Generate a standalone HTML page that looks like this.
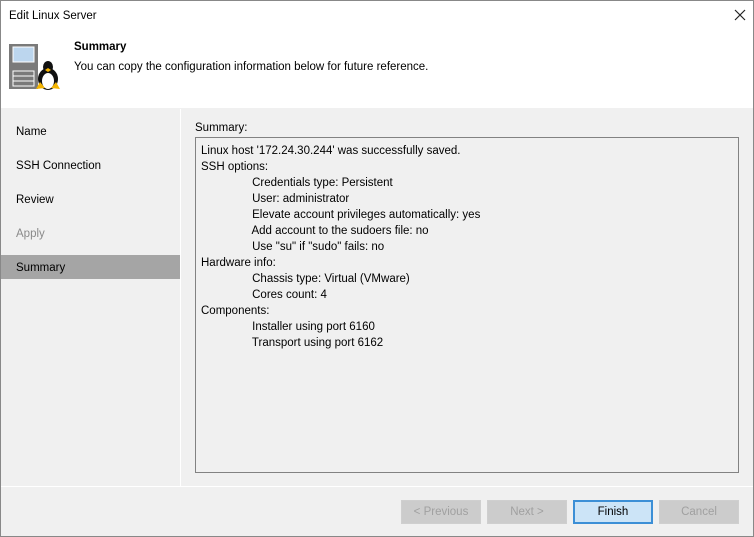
<html><head><style>
body{margin:0;width:754px;height:537px;overflow:hidden;font-family:"Liberation Sans",sans-serif;font-size:11.5px;color:#000}
.win{position:absolute;left:0;top:0;width:752px;height:535px;border:1px solid #888;background:#f0f0f0}
.abs{position:absolute}
.nav div{position:absolute;left:15px}
.btn{position:absolute;top:499px;width:78px;height:22px;border:1px solid #cfcfcf;background:#cccccc;color:#a0a0a0;text-align:center;line-height:22px}
</style></head><body><div class="win">
<div class="abs" style="left:0;top:0;width:752px;height:107px;background:#fff"></div>
<div class="abs" style="left:8px;top:9px">Edit Linux Server</div>
<svg class="abs" style="left:733px;top:8px" width="12" height="12"><path d="M1 1L11 11M11 1L1 11" stroke="#222" stroke-width="1.2"/></svg>
<div class="abs" style="left:73px;top:40px;font-weight:bold">Summary</div>
<div class="abs" style="left:73px;top:60px">You can copy the configuration information below for future reference.</div>
<svg class="abs" style="left:7px;top:42px" width="54" height="48">
<rect x="1" y="1" width="29" height="45" fill="#7a7a7a"/>
<rect x="5" y="4" width="21" height="15" fill="#bcd6ee" stroke="#fff" stroke-width="1"/>
<rect x="5" y="28" width="21" height="5" fill="none" stroke="#fff"/><rect x="5" y="33" width="21" height="5" fill="none" stroke="#fff"/><rect x="5" y="38" width="21" height="5" fill="none" stroke="#fff"/>
<ellipse cx="40" cy="36" rx="10" ry="11" fill="#111"/><ellipse cx="40" cy="38" rx="6" ry="8" fill="#fff"/>
<ellipse cx="40" cy="24" rx="5" ry="6" fill="#111"/><path d="M37 27 L40 29 L43 27 L40 25Z" fill="#f4b400"/>
<path d="M28 46 L32 39 L37 45Z M43 45 L48 39 L52 46Z" fill="#f4b400"/>
</svg>
<div class="abs" style="left:179px;top:108px;width:1px;height:377px;background:#fff"></div>
<div class="abs" style="left:0;top:254px;width:179px;height:24px;background:#a5a5a5"></div>
<div class="nav"><div style="top:125px">Name</div><div style="top:159px">SSH Connection</div><div style="top:193px">Review</div><div style="top:227px;color:#8a8a8a">Apply</div><div style="top:261px">Summary</div></div>
<div class="abs" style="left:194px;top:121px">Summary:</div>
<div class="abs" style="left:194px;top:136px;width:542px;height:334px;border:1px solid #828282;background:#f0f0f0"></div>
<div class="abs" style="left:200px;top:142px;line-height:16px;white-space:pre">Linux host '172.24.30.244' was successfully saved.
SSH options:
                Credentials type: Persistent
                User: administrator
                Elevate account privileges automatically: yes
                Add account to the sudoers file: no
                Use "su" if "sudo" fails: no
Hardware info:
                Chassis type: Virtual (VMware)
                Cores count: 4
Components:
                Installer using port 6160
                Transport using port 6162</div>
<div class="abs" style="left:0;top:485px;width:752px;height:1px;background:#fff"></div>
<div class="btn" style="left:400px">&lt; Previous</div>
<div class="btn" style="left:486px">Next &gt;</div>
<div class="btn" style="left:572px;border:2px solid #3c8fd6;background:#cce4f7;color:#000;width:76px;height:20px;line-height:20px">Finish</div>
<div class="btn" style="left:658px">Cancel</div>
</div></body></html>
